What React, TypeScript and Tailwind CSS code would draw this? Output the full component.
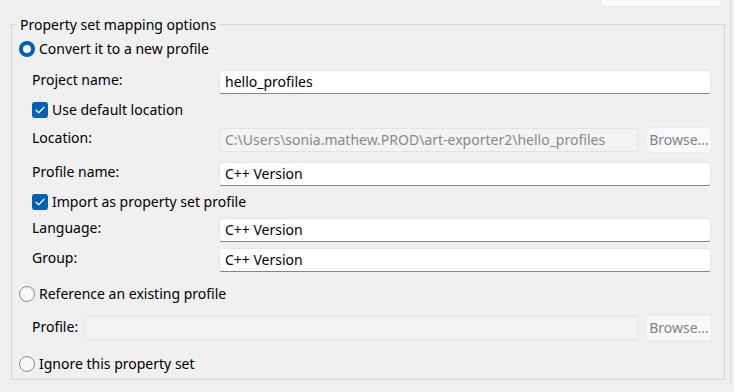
import React from 'react'

const font = { fontFamily: '"Noto Sans", "Open Sans", sans-serif' }

const Radio = ({ checked, label }: { checked?: boolean; label: string }) => (
  <div className="flex items-center h-[20px] gap-[4px]">
    {checked ? (
      <span className="w-[16px] h-[16px] rounded-full bg-[#005fb8] flex items-center justify-center">
        <span className="w-[8px] h-[8px] rounded-full bg-white" />
      </span>
    ) : (
      <span className="w-[16px] h-[16px] rounded-full border border-[#8a8a8a] bg-[#f7f7f7]" />
    )}
    <span className="leading-[20px]">{label}</span>
  </div>
)

const Check = ({ label }: { label: string }) => (
  <div className="flex items-center h-[20px] gap-[4px] ml-[13px]">
    <span className="w-[16px] h-[16px] rounded-[3px] bg-[#005fb8] flex items-center justify-center">
      <svg width="10" height="8" viewBox="0 0 10 8" fill="none">
        <path d="M1 4.2 L3.7 6.8 L9 1.2" stroke="white" strokeWidth="1.3" strokeLinecap="round" strokeLinejoin="round" />
      </svg>
    </span>
    <span className="leading-[20px]">{label}</span>
  </div>
)

const TextRow = ({ label, value, mt }: { label: string; value: string; mt: string }) => (
  <div className={`flex items-start ml-[13px] ${mt}`}>
    <span className="w-[187px] leading-[20px]">{label}</span>
    <div className="w-[492px] h-[24px] bg-white border border-[#e5e5e5] border-b-[#868686] rounded-[3px] px-[5px] leading-[22px]">
      {value}
    </div>
  </div>
)

const Browse = () => (
  <button className="w-[66px] h-[26px] -mt-[1px] ml-[8px] bg-[#f9f9f9] border border-[#ebebeb] rounded-[4px] text-[#838383] leading-[22px]">
    Browse...
  </button>
)

export default function App() {
  return (
    <div className="w-[734px] h-[392px] bg-[#f0f0f0] text-[14px] text-black overflow-hidden" style={font}>
      <div className="w-[731px] h-[384px] border-r border-[#dcdcdc] flex flex-col">
        <div className="h-0 flex justify-end pr-[8px]">
          <div className="w-[122px] h-[7px] bg-[#fbfbfb] border border-t-0 border-[#e8e8e8] rounded-b-[4px]" />
        </div>

        <div className="ml-[11px] mt-[24px] w-[714px] h-[356px] border border-[#d5d5d5] flex flex-col pl-[7px]">
          <span className="self-start -mt-[10px] -ml-[2px] px-[3px] bg-[#f0f0f0] leading-[20px]">
            Property set mapping options
          </span>

          <div className="mt-[4px]">
            <Radio checked label="Convert it to a new profile" />
          </div>

          <TextRow label="Project name:" value="hello_profiles" mt="mt-[11px]" />

          <div className="mt-[6px]">
            <Check label="Use default location" />
          </div>

          <div className="flex items-start ml-[13px] mt-[8px]">
            <span className="w-[187px] leading-[20px]">Location:</span>
            <div className="w-[419px] h-[24px] bg-[#f3f3f3] border border-[#e3e3e3] rounded-[3px] px-[5px] leading-[22px] text-[#8a8a8a]">
              C:\Users\sonia.mathew.PROD\art-exporter2\hello_profiles
            </div>
            <Browse />
          </div>

          <TextRow label="Profile name:" value="C++ Version" mt="mt-[9px]" />

          <div className="mt-[6px]">
            <Check label="Import as property set profile" />
          </div>

          <TextRow label="Language:" value="C++ Version" mt="mt-[6px]" />
          <TextRow label="Group:" value="C++ Version" mt="mt-[6px]" />

          <div className="mt-[12px]">
            <Radio label="Reference an existing profile" />
          </div>

          <div className="flex items-start ml-[13px] mt-[12px]">
            <span className="w-[52px] leading-[20px] mt-[1px]">Profile:</span>
            <div className="w-[554px] h-[24px] bg-[#f3f3f3] border border-[#e3e3e3] rounded-[3px]" />
            <Browse />
          </div>

          <div className="mt-[13px]">
            <Radio label="Ignore this property set" />
          </div>
        </div>
      </div>
    </div>
  )
}
